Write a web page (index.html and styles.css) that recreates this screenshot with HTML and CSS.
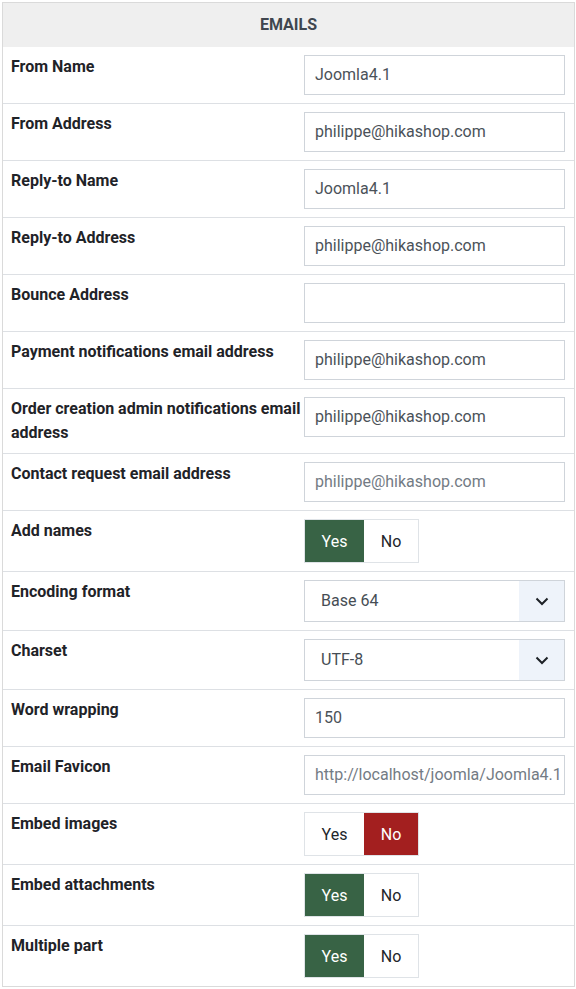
FILE: index.html
```html
<!DOCTYPE html>
<html>
<head>
<meta charset="utf-8">
<link rel="stylesheet" href="styles.css">
</head>
<body>
<div class="panel">
  <div class="panel-head">EMAILS</div>

  <div class="row">
    <div class="label">From Name</div>
    <div class="value"><div class="input">Joomla4.1</div></div>
  </div>
  <div class="row">
    <div class="label">From Address</div>
    <div class="value"><div class="input">philippe@hikashop.com</div></div>
  </div>
  <div class="row">
    <div class="label">Reply-to Name</div>
    <div class="value"><div class="input">Joomla4.1</div></div>
  </div>
  <div class="row">
    <div class="label">Reply-to Address</div>
    <div class="value"><div class="input">philippe@hikashop.com</div></div>
  </div>
  <div class="row">
    <div class="label">Bounce Address</div>
    <div class="value"><div class="input"></div></div>
  </div>
  <div class="row">
    <div class="label">Payment notifications email address</div>
    <div class="value"><div class="input">philippe@hikashop.com</div></div>
  </div>
  <div class="row">
    <div class="label">Order creation admin notifications email address</div>
    <div class="value"><div class="input">philippe@hikashop.com</div></div>
  </div>
  <div class="row">
    <div class="label">Contact request email address</div>
    <div class="value"><div class="input placeholder">philippe@hikashop.com</div></div>
  </div>
  <div class="row">
    <div class="label">Add names</div>
    <div class="value">
      <div class="switch"><span class="opt yes on">Yes</span><span class="opt no">No</span></div>
    </div>
  </div>
  <div class="row">
    <div class="label">Encoding format</div>
    <div class="value">
      <div class="select"><span class="select-text">Base 64</span><span class="select-arrow"><svg width="14" height="9" viewBox="0 0 14 9"><path d="M1.5 1.5 L7 7 L12.5 1.5" fill="none" stroke="#1d2126" stroke-width="2"/></svg></span></div>
    </div>
  </div>
  <div class="row">
    <div class="label">Charset</div>
    <div class="value">
      <div class="select"><span class="select-text">UTF-8</span><span class="select-arrow"><svg width="14" height="9" viewBox="0 0 14 9"><path d="M1.5 1.5 L7 7 L12.5 1.5" fill="none" stroke="#1d2126" stroke-width="2"/></svg></span></div>
    </div>
  </div>
  <div class="row">
    <div class="label">Word wrapping</div>
    <div class="value"><div class="input">150</div></div>
  </div>
  <div class="row">
    <div class="label">Email Favicon</div>
    <div class="value"><div class="input placeholder clip">http://localhost/joomla/Joomla4.1</div></div>
  </div>
  <div class="row">
    <div class="label">Embed images</div>
    <div class="value">
      <div class="switch"><span class="opt yes">Yes</span><span class="opt no on">No</span></div>
    </div>
  </div>
  <div class="row">
    <div class="label">Embed attachments</div>
    <div class="value">
      <div class="switch"><span class="opt yes on">Yes</span><span class="opt no">No</span></div>
    </div>
  </div>
  <div class="row last">
    <div class="label">Multiple part</div>
    <div class="value">
      <div class="switch"><span class="opt yes on">Yes</span><span class="opt no">No</span></div>
    </div>
  </div>
</div>
</body>
</html>
```

FILE: styles.css
```css
html, body {
  margin: 0;
  padding: 0;
  background: #ffffff;
}

body {
  font-family: Roboto, "Liberation Sans", sans-serif;
  font-size: 16px;
  color: #22262a;
}

.panel {
  margin: 2px 1px 2px 2px;
  border: 1px solid #dadada;
}

.panel-head {
  height: 44px;
  line-height: 44px;
  background: #efefef;
  text-align: center;
  font-weight: 700;
  color: #3f464f;
}

.row {
  display: grid;
  grid-template-columns: 298px 1fr;
  border-top: 1px solid #dde0e4;
}

.panel-head + .row {
  border-top: none;
}

.label {
  padding: 8px 0 8px 8px;
  line-height: 24px;
  font-weight: 700;
  color: #1f2328;
}

.value {
  padding: 8px 9px 8px 3px;
}

.input {
  box-sizing: border-box;
  width: 261px;
  height: 40px;
  border: 1px solid #cfd4da;
  padding: 0 10px;
  line-height: 38px;
  color: #4b5259;
  white-space: nowrap;
  overflow: hidden;
}

.input.placeholder {
  color: #737b84;
}

.select {
  box-sizing: border-box;
  width: 261px;
  height: 42px;
  border: 1px solid #cfd4da;
  display: flex;
  align-items: stretch;
}

.select-text {
  flex: 1;
  padding-left: 16px;
  line-height: 40px;
  color: #464d54;
}

.select-arrow {
  width: 45px;
  background: #eef3fa;
  display: flex;
  align-items: center;
  justify-content: center;
}

.switch {
  box-sizing: border-box;
  display: inline-flex;
  height: 44px;
  border: 1px solid #dfe3e7;
}

.opt {
  display: flex;
  align-items: center;
  justify-content: center;
  color: #22262a;
}

.opt.yes {
  width: 59px;
}

.opt.no {
  width: 54px;
}

.opt.yes.on {
  background: #386345;
  color: #ffffff;
}

.opt.no.on {
  background: #a31f1f;
  color: #ffffff;
}
```
